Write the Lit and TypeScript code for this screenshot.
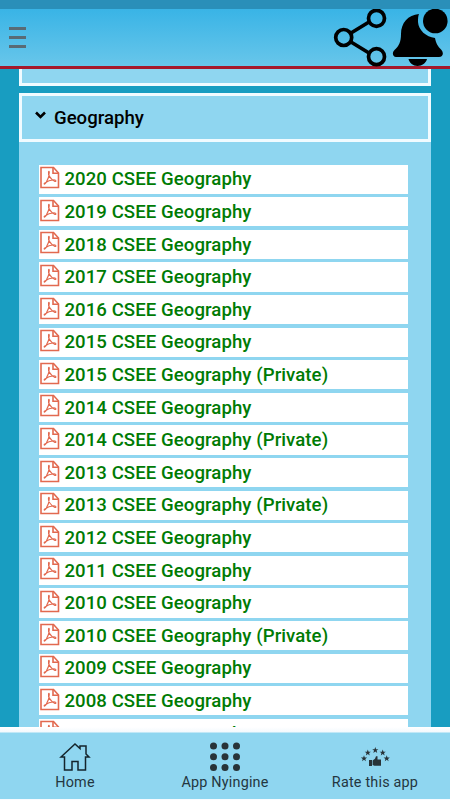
import { LitElement, html, css, svg } from "lit";
import { customElement, property } from "lit/decorators.js";

const papers = [
  "2020", "2019", "2018", "2017", "2016", "2015", "2015p", "2014", "2014p", "2013",
  "2013p", "2012", "2011", "2010", "2010p", "2009", "2008", "2007",
].map((key) => `${key.slice(0, 4)} CSEE Geography${key.endsWith("p") ? " (Private)" : ""}`);

@customElement("top-bar")
class TopBar extends LitElement {
  static styles = css`
    :host {
      display: block;
      flex: none;
    }
    .status {
      height: 9px;
      background: #2a8fb9;
    }
    .bar {
      box-sizing: border-box;
      height: 60px;
      display: flex;
      align-items: flex-start;
      background: linear-gradient(#39b4e6, #68c6ea);
      border-bottom: 3px solid #a5182b;
    }
    .menu {
      display: flex;
      flex-direction: column;
      gap: 6px;
      margin: 18px auto 0 9px;
    }
    .menu span {
      width: 17px;
      height: 3px;
      background: #596b75;
    }
    svg {
      display: block;
      height: 58px;
    }
    .share {
      width: 55px;
      margin-right: 4px;
    }
    .bell {
      width: 57px;
      margin-right: 1px;
    }
  `;
  render() {
    return html`
      <div class="status"></div>
      <div class="bar">
        <div class="menu"><span></span><span></span><span></span></div>
        <svg class="share" viewBox="333 9 55 58" fill="none" stroke="#000" stroke-width="3.7">
          <path d="M351 33 369 22M351 42 369 53" />
          <circle cx="343.7" cy="37.5" r="8" />
          <circle cx="376.5" cy="18.3" r="8" />
          <circle cx="376.5" cy="56.7" r="8" />
        </svg>
        <svg class="bell" viewBox="392 9 57 58">
          <path d="M419 14C408 15 401 23 401 34C401 42 399 46 394.5 50C391.5 53 393 57 396 57H439C443 57 444 53 441.5 50C437.5 46 436 43 435 38C426 37 418.5 30 418 22C418 19 418 16 419 14Z" />
          <path d="M408.5 59H427C426 63 422 66 417.500 66S409.5 63 408.5 59Z" />
          <circle cx="435.3" cy="21" r="12.3" />
        </svg>
      </div>
    `;
  }
}

@customElement("paper-row")
class PaperRow extends LitElement {
  @property() label = "";
  static styles = css`
    :host {
      display: flex;
      align-items: center;
      height: 29.2px;
      flex: none;
      background: #fff;
      color: #007b04;
      font: 500 18.6px/29px Roboto, sans-serif;
      letter-spacing: 0.07px;
      white-space: nowrap;
    }
    svg {
      width: 21px;
      height: 23px;
      margin: 0 3.4px 3px 1px;
    }
    span {
      margin-top: 1.4px;
    }
  `;
  render() {
    return html`
      <svg viewBox="0 0 21 23" fill="none" stroke="#e2694f" stroke-width="1.6">
        <path d="M1 1.500H13.500L18.500 7V21.500H1Z" />
        <path d="M13 1.500V7.200H18.500" />
        <path
          stroke-width="1.1"
          d="M8.500 6C8 9 9.500 12 14.500 15.300C16.500 16 16.500 14 14 13.700C10 14 7.500 15 4.500 17.200C3.500 18.500 5 18.500 6 16.800C8 13.500 9.300 10 9.300 6.500C9.300 5 8.600 5 8.500 6Z"
        />
      </svg>
      <span>${this.label}</span>
    `;
  }
}

const star = "M0-3.2.8-1 3.1-1 1.3.4 1.9 2.7 0 1.3-1.9 2.7-1.3.4-3.1-1-.8-1Z";

@customElement("bottom-nav")
class BottomNav extends LitElement {
  static styles = css`
    :host {
      display: flex;
      flex: none;
      box-sizing: border-box;
      height: 73px;
      padding-top: 6px;
      border-bottom: 1px solid #f7fbff;
      background: linear-gradient(#fff, #f3f9fd 5px, #8fd6f0 6px);
      font: 14.4px/18px Roboto, sans-serif;
      letter-spacing: 0.2px;
      color: #243640;
    }
    .item {
      flex: 1;
      display: flex;
      flex-direction: column;
      align-items: center;
      padding-top: 8px;
    }
    svg {
      width: 32px;
      height: 32px;
      margin-bottom: 1px;
    }
  `;
  render() {
    return html`
      <div class="item">
        <svg viewBox="0 0 32 32" fill="none" stroke="#14252c" stroke-width="1.5">
          <path d="M2 16 16 3 21 7.500V5H27V13L30 16H26.500V29H19V20.500H13V29H5.500V16Z" />
        </svg>
        <span>Home</span>
      </div>
      <div class="item">
        <svg viewBox="0 0 32 32" fill="#283338">
          ${[4.5, 16, 27.5].map((x) =>
            [5, 15.7, 26.4].map((y) => svg`<circle cx=${x} cy=${y} r="3.5" />`)
          )}
        </svg>
        <span>App Nyingine</span>
      </div>
      <div class="item">
        <svg viewBox="0 0 32 32" fill="#283338">
          ${[[5, 17.5], [8.8, 11.7], [16.3, 9.2], [23.7, 11.7], [27.7, 17.5]].map(
            ([x, y]) => svg`<path transform="translate(${x} ${y})" d=${star} />`
          )}
          <path d="M10 19H13V25H10ZM13.600 19.500 16 17.800 17 15.300H18.500V18.500H22V24.800H15.500L13.600 24Z" />
        </svg>
        <span>Rate this app</span>
      </div>
    `;
  }
}

@customElement("app-root")
class AppRoot extends LitElement {
  static styles = css`
    :host {
      display: flex;
      flex-direction: column;
      height: 800px;
      overflow: hidden;
      background: #189dc1;
    }
    .content {
      flex: 1;
      min-height: 0;
      overflow: hidden;
      padding: 0 19px;
    }
    .previous {
      box-sizing: border-box;
      height: 17px;
      margin-bottom: 7px;
      border: 3px solid #f1fbff;
      border-top: 0;
      background: #8fd6f0;
    }
    .panel {
      background: #8fd6f0;
    }
    .heading {
      box-sizing: border-box;
      height: 49px;
      display: flex;
      align-items: center;
      border: 3px solid #f1fbff;
      padding-left: 13px;
      font: 500 18.6px/24px Roboto, sans-serif;
      color: #000;
    }
    .heading svg {
      width: 11px;
      height: 8px;
      margin: 0 8px 5px 0;
    }
    .papers {
      display: flex;
      flex-direction: column;
      gap: 3.43px;
      padding: 22.5px 23.5px 0 20px;
    }
  `;
  render() {
    return html`
      <top-bar></top-bar>
      <div class="content">
        <div class="previous"></div>
        <div class="panel">
          <div class="heading">
            <svg viewBox="0 0 11 8" fill="none" stroke="#000" stroke-width="2.6">
              <path d="M1 1.500 5.500 6 10 1.500" />
            </svg>
            <span>Geography</span>
          </div>
          <div class="papers">${papers.map((p) => html`<paper-row .label=${p}></paper-row>`)}</div>
        </div>
      </div>
      <bottom-nav></bottom-nav>
    `;
  }
}
